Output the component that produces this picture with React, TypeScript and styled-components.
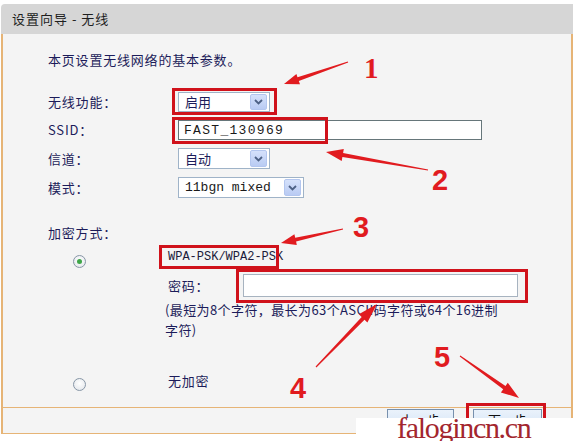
import React from "react";
import styled, { createGlobalStyle } from "styled-components";

const GlobalStyle = createGlobalStyle`
  html, body { margin: 0; padding: 0; background: #ffffff; }
  * { box-sizing: border-box; }
`;

const ORANGE = "#e6b476";
const TEXT = "#1c1c5a";
const CJK = `"Noto Sans CJK SC", "Noto Sans", sans-serif`;

const Page = styled.div`
  position: relative;
  width: 576px;
  height: 441px;
  overflow: hidden;
  padding-top: 4px;
  font-family: ${CJK};
  font-size: 13px;
  color: ${TEXT};
`;

const Header = styled.div`
  margin-left: 1px;
  width: 572px;
  height: 30px;
  background: #d6d6d6;
  border-top-left-radius: 4px;
  display: flex;
  align-items: center;
  padding-left: 11px;
  color: #1e1e1e;
  font-size: 13px;
  line-height: 16px;
  letter-spacing: 1px;
  white-space: pre;
`;

const Body = styled.div`
  margin-left: 1px;
  width: 572px;
  height: 374px;
  background: #f4f4f4;
  border-left: 2px solid ${ORANGE};
  border-right: 2px solid ${ORANGE};
  border-bottom: 1px solid ${ORANGE};
  padding: 16px 0 0 45px;
  letter-spacing: 0.8px;
`;

const Line = styled.div<{ $mt?: number }>`
  margin-top: ${(p) => p.$mt ?? 0}px;
  height: 20px;
  line-height: 20px;
  white-space: nowrap;
`;

const FieldList = styled.div`
  margin-top: 22px;
  display: flex;
  flex-direction: column;
  gap: 8px;
`;

const Row = styled.div<{ $h: number }>`
  display: grid;
  grid-template-columns: 130px 1fr;
  align-items: center;
  height: ${(p) => p.$h}px;
`;

const Label = styled.span`
  line-height: 16px;
  white-space: nowrap;
`;

const SelectBox = styled.div<{ $w: number }>`
  width: ${(p) => p.$w}px;
  height: 100%;
  background: #fff;
  border: 1px solid #9fb3c8;
  display: flex;
  align-items: center;
  justify-content: space-between;
  padding: 0 2px 0 6px;
  line-height: 16px;
  letter-spacing: 0;
`;

const MonoValue = styled.span<{ $ls?: number }>`
  font-family: "Liberation Mono", monospace;
  font-size: 13px;
  letter-spacing: ${(p) => p.$ls ?? 0}px;
  color: #1a1a1a;
`;

const DropButton = styled.span`
  width: 17px;
  height: calc(100% - 2px);
  background: linear-gradient(#d5e1fb, #b9cbf3);
  border: 1px solid #b3c6ef;
  border-radius: 2px;
  display: flex;
  align-items: center;
  justify-content: center;
`;

const TextInput = styled.div<{ $w: number; $border: string }>`
  width: ${(p) => p.$w}px;
  height: 100%;
  background: #fff;
  border: 1px solid ${(p) => p.$border};
  display: flex;
  align-items: center;
  padding-left: 5px;
`;

const Option = styled.div<{ $mt: number }>`
  margin-top: ${(p) => p.$mt}px;
  display: grid;
  grid-template-columns: 120px 1fr;
`;

const Radio = styled.span<{ $checked?: boolean; $mt: number }>`
  margin: ${(p) => p.$mt}px 0 0 25px;
  width: 13px;
  height: 13px;
  border-radius: 50%;
  border: 1px solid #8796a6;
  background: radial-gradient(circle at 50% 40%, #ffffff, #dfe3e8);
  display: flex;
  align-items: center;
  justify-content: center;
  &::after {
    content: "";
    display: ${(p) => (p.$checked ? "block" : "none")};
    width: 5px;
    height: 5px;
    border-radius: 50%;
    background: #3ea548;
  }
`;

const OptionContent = styled.div`
  display: flex;
  flex-direction: column;
`;

const WpaText = styled.div`
  height: 20px;
  line-height: 20px;
  font-family: "Liberation Mono", monospace;
  font-size: 12px;
  letter-spacing: 0;
  color: #1a1a3a;
  white-space: nowrap;
`;

const PassRow = styled.div`
  margin-top: 7px;
  height: 23px;
  display: grid;
  grid-template-columns: 75px 1fr;
  align-items: center;
`;

const Hint = styled.div`
  margin: 3px 0 0 -3px;
  line-height: 20px;
  white-space: nowrap;
  letter-spacing: 0.4px;
`;

const HintLine = styled.span`
  display: block;
`;

const Footer = styled.div`
  margin-left: 1px;
  width: 572px;
  height: 26px;
  background: #f4f4f4;
  border-left: 2px solid ${ORANGE};
  border-right: 2px solid ${ORANGE};
  border-bottom: 1px solid ${ORANGE};
  display: flex;
  justify-content: flex-end;
  align-items: flex-start;
  gap: 19px;
  padding: 1px 29px 0 0;
`;

const Button = styled.button<{ $w: number }>`
  width: ${(p) => p.$w}px;
  height: 22px;
  background: linear-gradient(#eaf2fb, #d4e4f6);
  border: 1px solid #7790ad;
  font-family: ${CJK};
  font-size: 13px;
  color: #111;
  padding: 0;
  line-height: 18px;
`;

const Overlay = styled.svg`
  position: absolute;
  left: 0;
  top: 0;
  pointer-events: none;
`;

const Watermark = styled.div`
  position: absolute;
  left: 356px;
  top: 418px;
  width: 220px;
  height: 23px;
  background: #ffffff;
  padding-left: 41px;
  font-family: "Liberation Serif", serif;
  font-size: 30px;
  letter-spacing: -1.3px;
  line-height: 20px;
  color: #a3262e;
  white-space: nowrap;
`;

const Chevron = () => (
  <svg width="9" height="6" viewBox="0 0 9 6">
    <path d="M1 1 L4.5 4.5 L8 1" fill="none" stroke="#4d6185" strokeWidth="1.8" />
  </svg>
);

function arrow(x1: number, y1: number, x2: number, y2: number, hl = 15, hw = 11, sw = 4) {
  const dx = x2 - x1;
  const dy = y2 - y1;
  const L = Math.hypot(dx, dy);
  const ux = dx / L;
  const uy = dy / L;
  const nx = -uy;
  const ny = ux;
  const bx = x2 - ux * hl;
  const by = y2 - uy * hl;
  const pts = [
    [x1 + nx * 0.6, y1 + ny * 0.6],
    [bx + (nx * sw) / 2, by + (ny * sw) / 2],
    [bx + (nx * hw) / 2, by + (ny * hw) / 2],
    [x2, y2],
    [bx - (nx * hw) / 2, by - (ny * hw) / 2],
    [bx - (nx * sw) / 2, by - (ny * sw) / 2],
    [x1 - nx * 0.6, y1 - ny * 0.6],
  ];
  return pts.map((p) => p.map((v) => v.toFixed(1)).join(",")).join(" ");
}

const RED = "#e11b1f";
const BOX = "#d0121b";

export default function App() {
  return (
    <>
      <GlobalStyle />
      <Page>
        <Header>设置向导 - 无线</Header>
        <Body>
          <Line>本页设置无线网络的基本参数。</Line>
          <FieldList>
            <Row $h={20}>
              <Label>无线功能：</Label>
              <SelectBox $w={92}>
                <span>启用</span>
                <DropButton>
                  <Chevron />
                </DropButton>
              </SelectBox>
            </Row>
            <Row $h={20}>
              <Label>SSID：</Label>
              <TextInput $w={304} $border="#66767a">
                <MonoValue $ls={1.3}>FAST_130969</MonoValue>
              </TextInput>
            </Row>
            <Row $h={21}>
              <Label>信道：</Label>
              <SelectBox $w={92}>
                <span>自动</span>
                <DropButton>
                  <Chevron />
                </DropButton>
              </SelectBox>
            </Row>
            <Row $h={21}>
              <Label>模式：</Label>
              <SelectBox $w={126}>
                <MonoValue>11bgn mixed</MonoValue>
                <DropButton>
                  <Chevron />
                </DropButton>
              </SelectBox>
            </Row>
          </FieldList>
          <Line $mt={25}>加密方式：</Line>
          <Option $mt={4}>
            <Radio $checked $mt={8} />
            <OptionContent>
              <WpaText>WPA-PSK/WPA2-PSK</WpaText>
              <PassRow>
                <Label>密码：</Label>
                <TextInput $w={275} $border="#a7b3c0" />
              </PassRow>
              <Hint>
                <HintLine>(最短为8个字符，最长为63个ASCII码字符或64个16进制</HintLine>
                <HintLine>字符)</HintLine>
              </Hint>
            </OptionContent>
          </Option>
          <Option $mt={31}>
            <Radio $mt={7} />
            <Line>无加密</Line>
          </Option>
        </Body>
        <Footer>
          <Button $w={67}>上一步</Button>
          <Button $w={69}>下一步</Button>
        </Footer>

        <Overlay width="576" height="441" viewBox="0 0 576 441">
          <g fill="none" stroke={BOX} strokeWidth="3">
            <rect x="173.5" y="89.5" width="102" height="24" />
            <rect x="173.5" y="118.5" width="153" height="24" />
            <rect x="160.5" y="246.5" width="117" height="21" />
            <rect x="237.5" y="270.5" width="289" height="31" />
            <rect x="467.5" y="404.5" width="77" height="40" />
          </g>
          <g fill={RED}>
            <polygon points={arrow(348, 62, 284, 84)} />
            <polygon points={arrow(428, 170, 326, 152, 17, 12, 4)} />
            <polygon points={arrow(343, 229, 281, 243)} />
            <polygon points={arrow(316, 367, 377, 304, 20, 12, 4)} />
            <polygon points={arrow(460, 356, 519, 398, 18, 12, 4)} />
          </g>
          <g fill={RED} fontWeight="700" fontSize="29" fontFamily="Liberation Sans, sans-serif">
            <text x="364" y="78" fontFamily="Liberation Serif, serif">1</text>
            <text x="432" y="190">2</text>
            <text x="353" y="237">3</text>
            <text x="290" y="398">4</text>
            <text x="434" y="367">5</text>
          </g>
        </Overlay>
        <Watermark>falogincn.cn</Watermark>
      </Page>
    </>
  );
}
